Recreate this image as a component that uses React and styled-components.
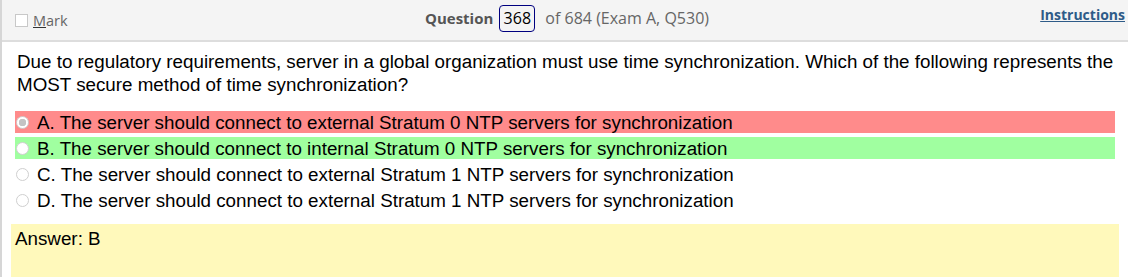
import React from "react";
import styled, { createGlobalStyle } from "styled-components";

const GlobalStyle = createGlobalStyle`
  html, body {
    margin: 0;
    padding: 0;
    background: #ffffff;
  }
`;

const question = {
  number: 368,
  total: 684,
  exam: "Exam A, Q530",
  text: "Due to regulatory requirements, server in a global organization must use time synchronization. Which of the following represents the MOST secure method of time synchronization?",
  options: [
    { key: "A", text: "The server should connect to external Stratum 0 NTP servers for synchronization", state: "wrong" },
    { key: "B", text: "The server should connect to internal Stratum 0 NTP servers for synchronization", state: "right" },
    { key: "C", text: "The server should connect to external Stratum 1 NTP servers for synchronization" },
    { key: "D", text: "The server should connect to external Stratum 1 NTP servers for synchronization" },
  ],
  answer: "B",
};

export default function App() {
  return (
    <>
      <GlobalStyle />
      <Page>
        <Header>
          <MarkLabel>
            <CheckBox />
            <span>
              <u>M</u>ark
            </span>
          </MarkLabel>
          <Counter>
            <CounterLabel>Question</CounterLabel>
            <NumberBox>{question.number}</NumberBox>
            <CounterRest>
              of {question.total} ({question.exam})
            </CounterRest>
          </Counter>
          <InstructionsLink href="#">Instructions</InstructionsLink>
        </Header>
        <Body>
          <QuestionText>{question.text}</QuestionText>
          <Options>
            {question.options.map((o) => (
              <Option key={o.key} $state={o.state}>
                <Radio $checked={o.state === "wrong"} />
                <span>
                  {o.key}. {o.text}
                </span>
              </Option>
            ))}
          </Options>
        </Body>
        <AnswerBox>Answer: {question.answer}</AnswerBox>
      </Page>
    </>
  );
}

const Page = styled.div`
  min-height: 100vh;
  border-left: 2px solid #d6d6d6;
  box-sizing: border-box;
  font-family: "Liberation Sans", Arial, sans-serif;
  color: #000;
`;

const Header = styled.div`
  display: grid;
  grid-template-columns: 1fr auto 1fr;
  align-items: center;
  height: 40px;
  padding: 0 3px 0 13px;
  background: #f4f4f4;
  border-bottom: 2px solid #dddddd;
  font-family: "Open Sans", "Segoe UI", sans-serif;
  font-size: 14px;
`;

const MarkLabel = styled.label`
  display: flex;
  align-items: center;
  gap: 5px;
  color: #666;
  font-size: 14.5px;
  padding-top: 1px;

  u {
    text-decoration-color: #333;
  }
`;

const CheckBox = styled.span`
  display: inline-block;
  width: 11px;
  height: 11px;
  border: 1px solid #c8c8c8;
  background: #fff;
`;

const Counter = styled.div`
  display: flex;
  align-items: center;
  margin-bottom: 4px;
  margin-right: 6px;
`;

const CounterLabel = styled.span`
  font-weight: 700;
  font-size: 15px;
  color: #555;
  margin-right: 6px;
`;

const NumberBox = styled.span`
  box-sizing: border-box;
  display: inline-flex;
  align-items: center;
  justify-content: center;
  width: 36px;
  height: 27px;
  border: 1.5px solid #000080;
  border-radius: 4px;
  color: #000;
  font-size: 16px;
  margin-right: 10px;
`;

const CounterRest = styled.span`
  color: #666;
  font-size: 16px;
`;

const InstructionsLink = styled.a`
  justify-self: end;
  align-self: start;
  margin-top: 5px;
  font-weight: 700;
  font-size: 14px;
  color: #2e5b88;
  text-decoration: underline;
`;

const Body = styled.div`
  padding: 8px 13px 0 13px;
  font-size: 18.8px;
`;

const QuestionText = styled.p`
  margin: 0 -12px 15px 2px;
  line-height: 23px;
`;

const Options = styled.div`
  display: flex;
  flex-direction: column;
  gap: 4px;
`;

const Option = styled.div`
  box-sizing: border-box;
  display: flex;
  align-items: center;
  gap: 8px;
  height: 22px;
  padding: 2px 0 0 1px;
  line-height: 20px;
  background: ${(p) =>
    p.$state === "wrong" ? "#ff8b8b" : p.$state === "right" ? "#a0ffa0" : "transparent"};
`;

const Radio = styled.span`
  box-sizing: border-box;
  width: 13px;
  height: 13px;
  margin-top: -2px;
  border-radius: 50%;
  border: 1px solid #cfcfcf;
  background: ${(p) => (p.$checked ? "radial-gradient(circle, #c4c4c4 0 3.5px, #fff 4px)" : "#fff")};
  flex: none;
`;

const AnswerBox = styled.div`
  margin: 13px 9px 0 9px;
  padding: 4px 4px;
  min-height: 45px;
  background: #fff9bb;
  font-size: 18.8px;
  line-height: 22px;
`;
